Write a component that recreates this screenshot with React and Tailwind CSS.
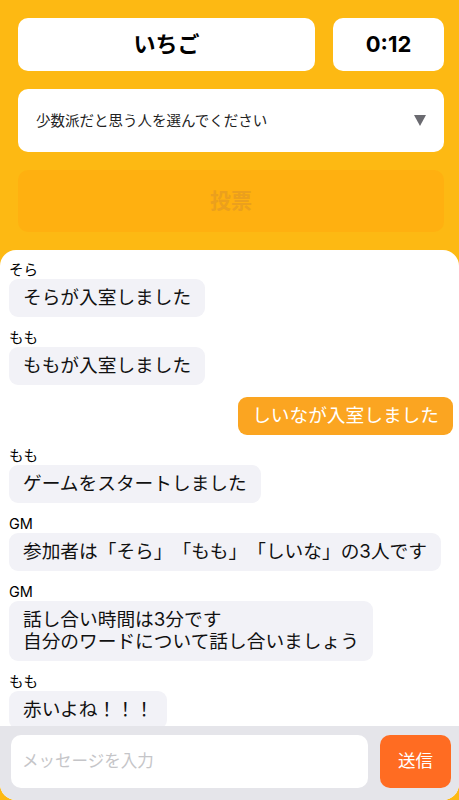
import React from 'react';

const FONT = { fontFamily: '"Inter", "Noto Sans CJK JP", sans-serif' };

const messages = [
  { name: 'そら', lines: ['そらが入室しました'] },
  { name: 'もも', lines: ['ももが入室しました'] },
  { mine: true, lines: ['しいなが入室しました'] },
  { name: 'もも', lines: ['ゲームをスタートしました'] },
  { name: 'GM', lines: ['参加者は「そら」「もも」「しいな」の3人です'] },
  { name: 'GM', lines: ['話し合い時間は3分です', '自分のワードについて話し合いましょう'] },
  { name: 'もも', lines: ['赤いよね！！！'] },
];

function Message({ msg }) {
  if (msg.mine) {
    return (
      <div className="flex justify-end pr-[6px]">
        <div className="bg-[#fba521] text-white text-[18.7px] leading-[22px] px-[14px] py-[8px] rounded-[9px]">
          {msg.lines[0]}
        </div>
      </div>
    );
  }
  return (
    <div className="flex flex-col items-start pl-[9px]">
      <div className="text-[14.5px] leading-[18px] text-black">{msg.name}</div>
      <div className="bg-[#f2f2f7] text-[#111] text-[18.7px] leading-[22px] px-[14px] py-[8px] rounded-[9px]">
        {msg.lines.map((l, i) => (
          <div key={i}>{l}</div>
        ))}
      </div>
    </div>
  );
}

export default function App() {
  return (
    <div
      className="w-[459px] h-[800px] bg-[#fdb913] flex flex-col overflow-hidden [text-spacing-trim:space-all]"
      style={FONT}
    >
      <div className="pl-[18px] pr-[15px] pt-[18px] flex flex-col">
        <div className="flex gap-[18px]">
          <div className="flex-1 h-[53px] bg-white rounded-[10px] flex items-center justify-center text-[22px] font-bold text-black">
            いちご
          </div>
          <div className="w-[111px] h-[53px] bg-white rounded-[10px] flex items-center justify-center text-[22px] font-bold text-black">
            0:12
          </div>
        </div>
        <div className="mt-[18px] h-[63px] bg-white rounded-[10px] flex items-center justify-between pl-[18px] pr-[18px]">
          <span className="text-[14.5px] text-[#222]">少数派だと思う人を選んでください</span>
          <svg width="12" height="11" viewBox="0 0 12 11">
            <path d="M0 0 H12 L6 11 Z" fill="#6a6a70" />
          </svg>
        </div>
        <div className="mt-[18px] h-[62px] bg-[#ffb010] rounded-[10px] flex items-center justify-center text-[21px] font-semibold text-[#eba01d]">
          投票
        </div>
      </div>
      <div className="mt-[18px] flex-1 bg-white rounded-[16px] flex flex-col overflow-hidden">
        <div className="flex-1 overflow-hidden pt-[11px] flex flex-col gap-[12px]">
          {messages.map((m, i) => (
            <Message key={i} msg={m} />
          ))}
        </div>
        <div className="h-[74px] bg-[#e5e5ea] flex items-start gap-[12px] pl-[11px] pr-[8px] pt-[9px]">
          <div className="flex-1 h-[53px] bg-white rounded-[10px] flex items-center pl-[11px] text-[16.5px] text-[#c5c5c8]">
            メッセージを入力
          </div>
          <div className="w-[71px] h-[53px] bg-[#ff6c22] rounded-[10px] flex items-center justify-center text-white text-[17.5px]">
            送信
          </div>
        </div>
      </div>
    </div>
  );
}
